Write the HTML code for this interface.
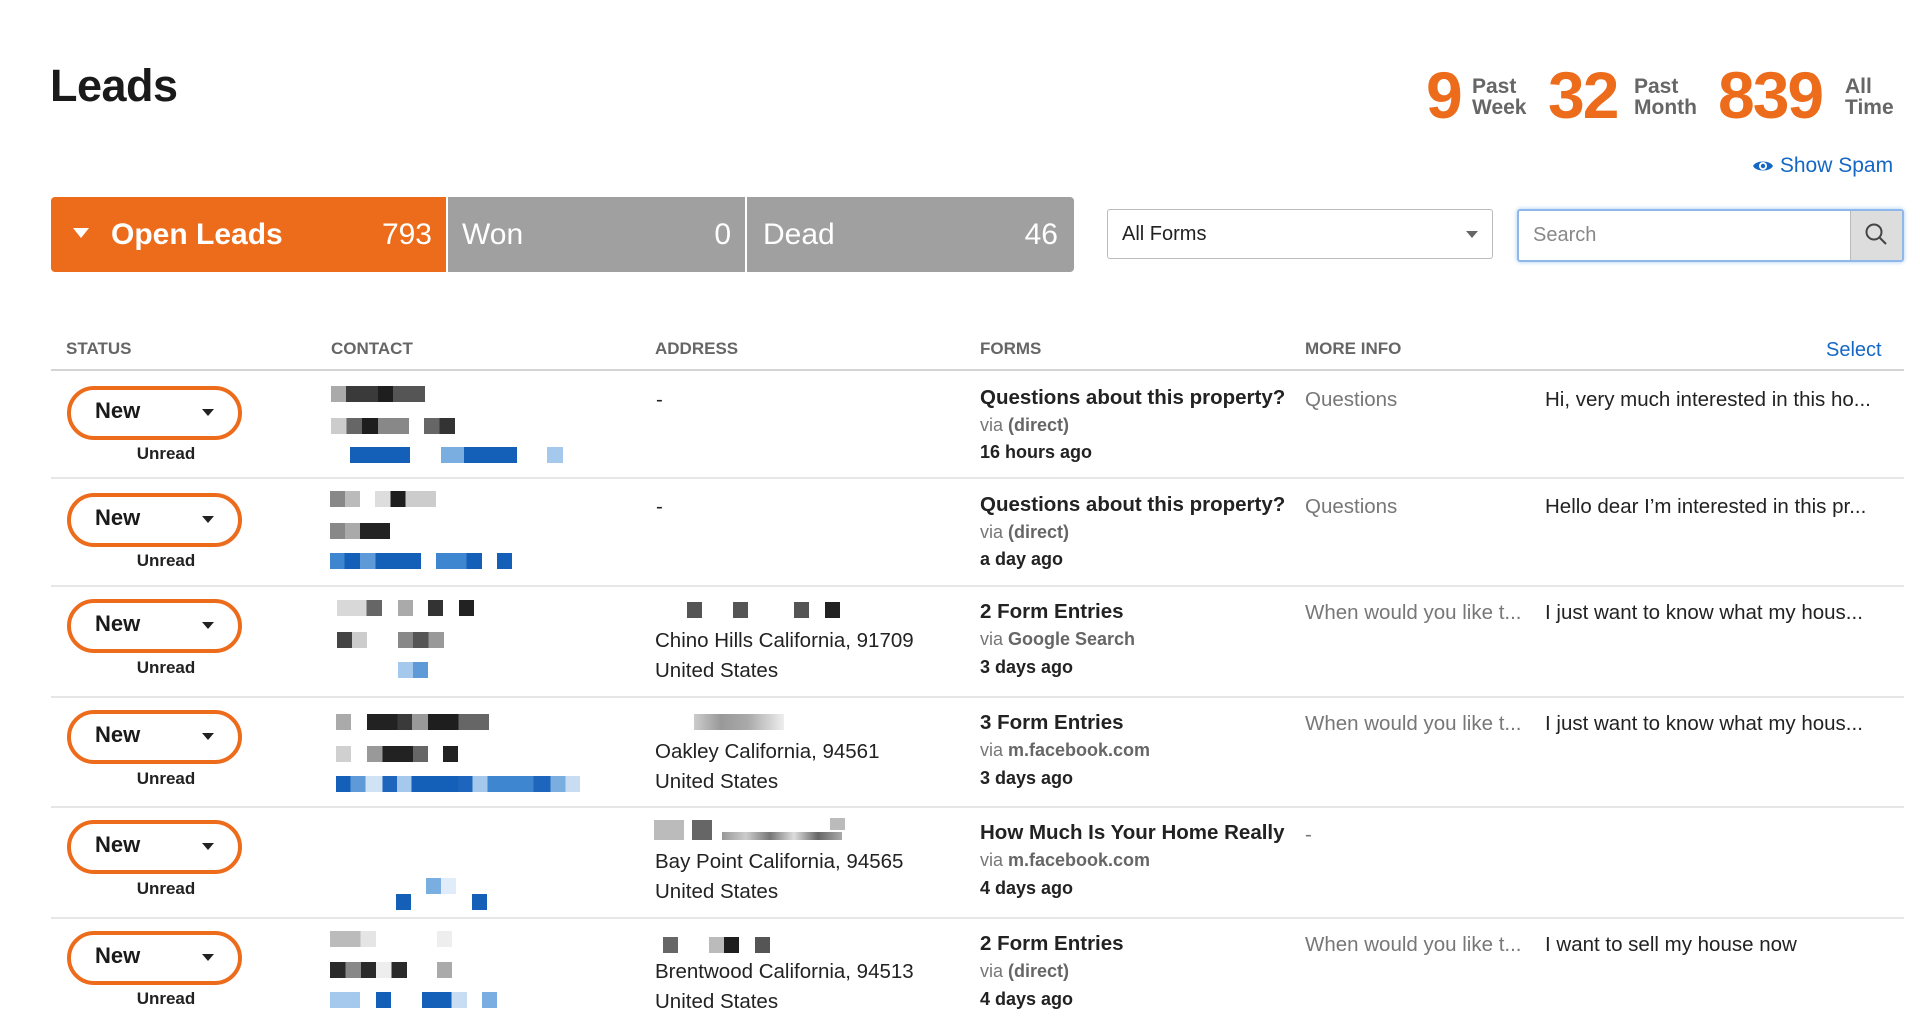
<!DOCTYPE html>
<html><head><meta charset="utf-8"><style>
*{margin:0;padding:0;box-sizing:border-box}
body{width:1920px;height:1029px;overflow:hidden;background:#fff;font-family:"Liberation Sans",sans-serif;color:#222;position:relative}
.a{position:absolute;white-space:nowrap}
h1{position:absolute;left:50px;top:60px;font-size:45px;font-weight:bold;color:#1a1a1a;letter-spacing:-0.5px}
.num{position:absolute;top:60px;font-size:66px;font-weight:bold;color:#ec6c1c;letter-spacing:-2px;line-height:70px}
.lbl{position:absolute;top:76px;font-size:21px;font-weight:bold;color:#666;line-height:21px}
.tab{position:absolute;top:197px;height:75px;color:#fff;font-size:30px;line-height:75px}
.hd{position:absolute;top:339px;font-size:17px;font-weight:bold;color:#666}
.line{position:absolute;left:51px;width:1853px;height:2px;background:#e6e6e6}
.btn{position:absolute;left:67px;width:175px;height:54px;border:4px solid #ec6c1c;border-radius:27px;font-weight:bold;font-size:22px;line-height:42px;padding-left:24px;color:#1a1a1a}
.btn:after{content:"";position:absolute;right:24px;top:19px;border:6px solid transparent;border-top:7px solid #222;border-bottom:0}
.unr{position:absolute;left:67px;width:200px;text-align:center;font-weight:bold;font-size:17px}
.t{position:absolute;font-size:20.5px;white-space:nowrap}
.b{font-weight:bold}
.g{color:#777}
.px{position:absolute;height:16px}
</style></head><body>
<h1>Leads</h1>
<div class="num" style="left:1426px">9</div><div class="lbl" style="left:1472px">Past<br>Week</div>
<div class="num" style="left:1548px">32</div><div class="lbl" style="left:1634px">Past<br>Month</div>
<div class="num" style="left:1718px">839</div><div class="lbl" style="left:1845px">All<br>Time</div>
<div class="a" style="left:1752px;top:154px;font-size:21px;color:#1567c4"><svg width="22" height="16" viewBox="0 0 22 16" style="vertical-align:-2px"><path d="M1 8C4 2 18 2 21 8C18 14 4 14 1 8Z" fill="#1567c4"/><circle cx="11" cy="8" r="4" fill="#fff"/><circle cx="11" cy="8" r="2.2" fill="#1567c4"/></svg> Show Spam</div>

<div class="tab" style="left:51px;width:395px;background:#ec6c1c;border-radius:4px 0 0 4px;font-weight:bold"><span style="position:absolute;left:22px;top:31px;border:8px solid transparent;border-top:10px solid #fff;border-bottom:0"></span><span style="position:absolute;left:60px">Open Leads</span><span style="position:absolute;right:14px;font-weight:normal">793</span></div>
<div class="tab" style="left:448px;width:297px;background:#a0a0a0"><span style="position:absolute;left:14px">Won</span><span style="position:absolute;right:14px">0</span></div>
<div class="tab" style="left:747px;width:327px;background:#a0a0a0;border-radius:0 4px 4px 0"><span style="position:absolute;left:16px">Dead</span><span style="position:absolute;right:16px">46</span></div>

<div class="a" style="left:1107px;top:209px;width:386px;height:50px;border:1px solid #bbb;border-radius:3px;font-size:20px;line-height:48px;padding-left:14px">All Forms<span style="position:absolute;right:14px;top:21px;border:6px solid transparent;border-top:7px solid #666;border-bottom:0"></span></div>
<div class="a" style="left:1517px;top:209px;width:387px;height:53px;border:2px solid #8fb8ea;box-shadow:0 0 5px #a9cbf3;border-radius:3px;font-size:20px;line-height:49px;padding-left:14px;color:#888">Search<div style="position:absolute;right:0;top:0;width:52px;height:49px;background:#ddd;border-left:1px solid #bbb"><svg width="26" height="26" viewBox="0 0 26 26" style="position:absolute;left:13px;top:11px"><circle cx="10" cy="10" r="7.5" fill="none" stroke="#444" stroke-width="2"/><path d="M15.5 15.5L22 22" stroke="#444" stroke-width="2"/></svg></div></div>

<div class="hd" style="left:66px">STATUS</div><div class="hd" style="left:331px">CONTACT</div><div class="hd" style="left:655px">ADDRESS</div><div class="hd" style="left:980px">FORMS</div><div class="hd" style="left:1305px">MORE INFO</div>
<div class="a" style="left:1826px;top:339px;font-size:20px;color:#1567c4">Select</div>
<div class="line" style="top:369px;background:#d4d4d4;height:2px"></div>
<div class="line" style="top:477px"></div><div class="line" style="top:585px"></div><div class="line" style="top:696px"></div><div class="line" style="top:806px"></div><div class="line" style="top:917px"></div>

<!-- row1 -->
<div class="btn" style="top:386px">New</div><div class="unr" style="top:444px;left:66px;width:200px">Unread</div>
<div class="px" style="top:386px;left:331px;width:94px;background:linear-gradient(90deg,#aaa 0 16%,#3a3a3a 16% 50%,#1e1e1e 50% 66%,#555 66%)"></div>
<div class="px" style="top:418px;left:331px;width:78px;background:linear-gradient(90deg,#ccc 0 20%,#666 20% 40%,#1e1e1e 40% 60%,#888 60%)"></div>
<div class="px" style="top:418px;left:424px;width:31px;background:linear-gradient(90deg,#666 50%,#333 50%)"></div>
<div class="px" style="top:447px;left:350px;width:60px;background:#1460b8"></div>
<div class="px" style="top:447px;left:441px;width:76px;background:linear-gradient(90deg,#7aaee0 0 30%,#1460b8 30%)"></div>
<div class="px" style="top:447px;left:547px;width:16px;background:#a5c9ec"></div>
<div class="t" style="left:656px;top:388px">-</div>
<div class="t b" style="left:980px;top:386px">Questions about this property?</div>
<div class="t g" style="left:980px;top:415px;font-size:18px">via <b style="color:#666">(direct)</b></div>
<div class="t b" style="left:980px;top:442px;font-size:18px">16 hours ago</div>
<div class="t g" style="left:1305px;top:388px">Questions</div>
<div class="t" style="left:1545px;top:388px">Hi, very much interested in this ho...</div>

<!-- row2 -->
<div class="btn" style="top:493px">New</div><div class="unr" style="top:551px;left:66px">Unread</div>
<div class="px" style="top:491px;left:330px;width:30px;background:linear-gradient(90deg,#888 50%,#bbb 50%)"></div>
<div class="px" style="top:491px;left:375px;width:61px;background:linear-gradient(90deg,#ddd 0 25%,#1e1e1e 25% 50%,#ccc 50%)"></div>
<div class="px" style="top:523px;left:330px;width:60px;background:linear-gradient(90deg,#888 0 25%,#aaa 25% 50%,#222 50%)"></div>
<div class="px" style="top:553px;left:330px;width:91px;background:linear-gradient(90deg,#3f86d0 0 16%,#1460b8 16% 33%,#5f9ad8 33% 50%,#1460b8 50%)"></div>
<div class="px" style="top:553px;left:436px;width:46px;background:linear-gradient(90deg,#3f86d0 66%,#1460b8 66%)"></div>
<div class="px" style="top:553px;left:497px;width:15px;background:#1460b8"></div>
<div class="t" style="left:656px;top:495px">-</div>
<div class="t b" style="left:980px;top:493px">Questions about this property?</div>
<div class="t g" style="left:980px;top:522px;font-size:18px">via <b style="color:#666">(direct)</b></div>
<div class="t b" style="left:980px;top:549px;font-size:18px">a day ago</div>
<div class="t g" style="left:1305px;top:495px">Questions</div>
<div class="t" style="left:1545px;top:495px">Hello dear I’m interested in this pr...</div>

<!-- row3 -->
<div class="btn" style="top:599px">New</div><div class="unr" style="top:658px;left:66px">Unread</div>
<div class="px" style="top:600px;left:337px;width:45px;background:linear-gradient(90deg,#d8d8d8 66%,#666 66%)"></div>
<div class="px" style="top:600px;left:398px;width:15px;background:#aaa"></div>
<div class="px" style="top:600px;left:428px;width:15px;background:#333"></div>
<div class="px" style="top:600px;left:459px;width:15px;background:#222"></div>
<div class="px" style="top:632px;left:337px;width:30px;background:linear-gradient(90deg,#444 50%,#ccc 50%)"></div>
<div class="px" style="top:632px;left:398px;width:46px;background:linear-gradient(90deg,#888 33%,#555 33% 66%,#999 66%)"></div>
<div class="px" style="top:662px;left:398px;width:30px;background:linear-gradient(90deg,#a5c9ec 50%,#5f9ad8 50%)"></div>
<div class="px" style="top:602px;left:687px;width:15px;background:#555"></div>
<div class="px" style="top:602px;left:733px;width:15px;background:#555"></div>
<div class="px" style="top:602px;left:794px;width:15px;background:#555"></div>
<div class="px" style="top:602px;left:825px;width:15px;background:#222"></div>
<div class="t" style="left:655px;top:629px">Chino Hills California, 91709</div>
<div class="t" style="left:655px;top:659px">United States</div>
<div class="t b" style="left:980px;top:600px">2 Form Entries</div>
<div class="t g" style="left:980px;top:629px;font-size:18px">via <b style="color:#666">Google Search</b></div>
<div class="t b" style="left:980px;top:657px;font-size:18px">3 days ago</div>
<div class="t g" style="left:1305px;top:601px">When would you like t...</div>
<div class="t" style="left:1545px;top:601px">I just want to know what my hous...</div>

<!-- row4 -->
<div class="btn" style="top:710px">New</div><div class="unr" style="top:769px;left:66px">Unread</div>
<div class="px" style="top:714px;left:336px;width:15px;background:#aaa"></div>
<div class="px" style="top:714px;left:367px;width:122px;background:linear-gradient(90deg,#222 0 25%,#3a3a3a 25% 37%,#999 37% 50%,#1e1e1e 50% 75%,#666 75%)"></div>
<div class="px" style="top:746px;left:336px;width:15px;background:#d0d0d0"></div>
<div class="px" style="top:746px;left:367px;width:61px;background:linear-gradient(90deg,#999 25%,#222 25% 75%,#666 75%)"></div>
<div class="px" style="top:746px;left:443px;width:15px;background:#222"></div>
<div class="px" style="top:776px;left:336px;width:244px;background:linear-gradient(90deg,#1460b8 0 6%,#5f9ad8 6% 12%,#d0e3f5 12% 19%,#1e66bd 19% 25%,#a5c9ec 25% 31%,#1460b8 31% 50%,#1e66bd 50% 56%,#a5c9ec 56% 62%,#3f86d0 62% 81%,#1e66bd 81% 88%,#7aaee0 88% 94%,#c8dcf2 94%)"></div>
<div class="px" style="top:714px;left:694px;width:90px;background:linear-gradient(90deg,#ccc,#999 30%,#aaa 60%,#eee)"></div>
<div class="t" style="left:655px;top:740px">Oakley California, 94561</div>
<div class="t" style="left:655px;top:770px">United States</div>
<div class="t b" style="left:980px;top:711px">3 Form Entries</div>
<div class="t g" style="left:980px;top:740px;font-size:18px">via <b style="color:#666">m.facebook.com</b></div>
<div class="t b" style="left:980px;top:768px;font-size:18px">3 days ago</div>
<div class="t g" style="left:1305px;top:712px">When would you like t...</div>
<div class="t" style="left:1545px;top:712px">I just want to know what my hous...</div>

<!-- row5 -->
<div class="btn" style="top:820px">New</div><div class="unr" style="top:879px;left:66px">Unread</div>
<div class="px" style="top:894px;left:396px;width:15px;background:#1460b8"></div>
<div class="px" style="top:894px;left:472px;width:15px;background:#1460b8"></div>
<div class="px" style="top:878px;left:426px;width:30px;background:linear-gradient(90deg,#7aaee0 50%,#e0ecf9 50%)"></div>
<div class="px" style="top:820px;left:654px;width:30px;height:20px;background:#aaa;opacity:.8"></div>
<div class="px" style="top:820px;left:692px;width:20px;height:20px;background:#666"></div>
<div class="px" style="top:832px;left:722px;width:120px;height:8px;background:linear-gradient(90deg,#999,#ccc,#777,#ddd,#666,#aaa)"></div>
<div class="px" style="top:818px;left:830px;width:15px;height:12px;background:#bbb"></div>
<div class="t" style="left:655px;top:850px">Bay Point California, 94565</div>
<div class="t" style="left:655px;top:880px">United States</div>
<div class="t b" style="left:980px;top:821px">How Much Is Your Home Really</div>
<div class="t g" style="left:980px;top:850px;font-size:18px">via <b style="color:#666">m.facebook.com</b></div>
<div class="t b" style="left:980px;top:878px;font-size:18px">4 days ago</div>
<div class="t g" style="left:1305px;top:823px">-</div>

<!-- row6 -->
<div class="btn" style="top:931px">New</div><div class="unr" style="top:989px;left:66px">Unread</div>
<div class="px" style="top:931px;left:330px;width:46px;background:linear-gradient(90deg,#bbb 66%,#e5e5e5 66%)"></div>
<div class="px" style="top:931px;left:437px;width:15px;background:#eee"></div>
<div class="px" style="top:962px;left:330px;width:77px;background:linear-gradient(90deg,#2a2a2a 0 20%,#888 20% 40%,#2a2a2a 40% 60%,#eee 60% 80%,#2a2a2a 80%)"></div>
<div class="px" style="top:962px;left:437px;width:15px;background:#aaa"></div>
<div class="px" style="top:992px;left:330px;width:30px;background:#a5c9ec"></div>
<div class="px" style="top:992px;left:376px;width:15px;background:#1460b8"></div>
<div class="px" style="top:992px;left:422px;width:45px;background:linear-gradient(90deg,#1460b8 66%,#c8dcf2 66%)"></div>
<div class="px" style="top:992px;left:482px;width:15px;background:#7aaee0"></div>
<div class="px" style="top:937px;left:663px;width:15px;background:#666"></div>
<div class="px" style="top:937px;left:709px;width:30px;background:linear-gradient(90deg,#bbb 50%,#1e1e1e 50%)"></div>
<div class="px" style="top:937px;left:755px;width:15px;background:#555"></div>
<div class="t" style="left:655px;top:960px">Brentwood California, 94513</div>
<div class="t" style="left:655px;top:990px">United States</div>
<div class="t b" style="left:980px;top:932px">2 Form Entries</div>
<div class="t g" style="left:980px;top:961px;font-size:18px">via <b style="color:#666">(direct)</b></div>
<div class="t b" style="left:980px;top:989px;font-size:18px">4 days ago</div>
<div class="t g" style="left:1305px;top:933px">When would you like t...</div>
<div class="t" style="left:1545px;top:933px">I want to sell my house now</div>
</body></html>
